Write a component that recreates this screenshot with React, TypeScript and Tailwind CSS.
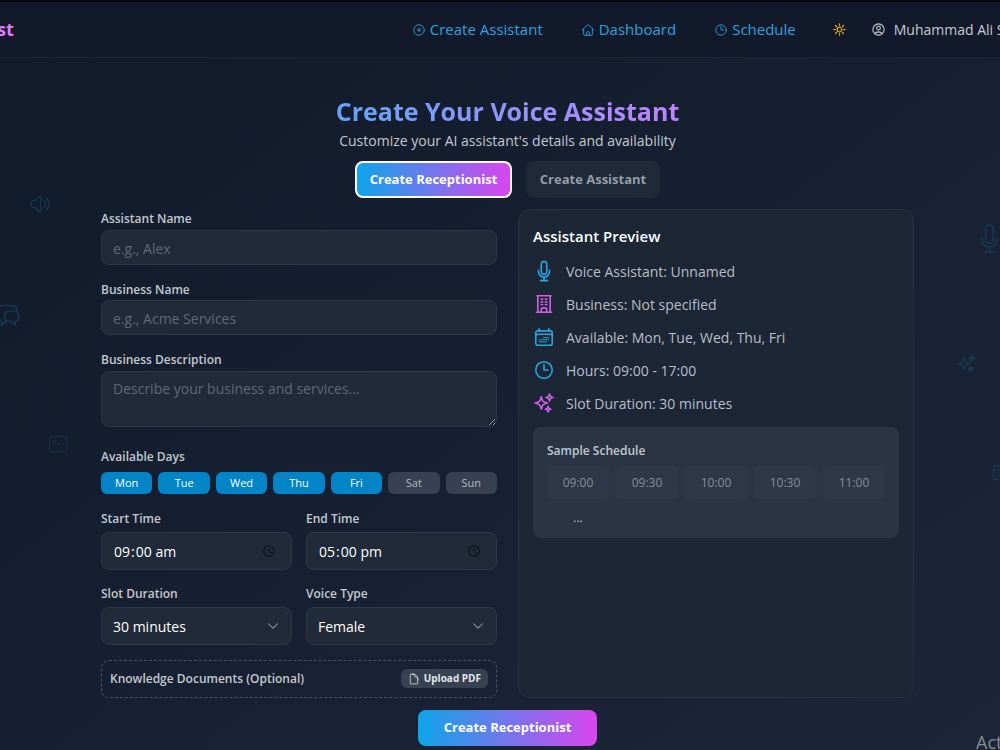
import { useState } from "react";
import type { ReactNode } from "react";
import {
  HiOutlineBuildingOffice,
  HiOutlineCalendarDays,
  HiOutlineChatBubbleLeftRight,
  HiOutlineChevronDown,
  HiOutlineClock,
  HiOutlineCommandLine,
  HiOutlineDocument,
  HiOutlineHome,
  HiOutlineMicrophone,
  HiOutlinePlusCircle,
  HiOutlineSparkles,
  HiOutlineSpeakerWave,
  HiOutlineSun,
  HiOutlineUserCircle,
} from "react-icons/hi2";

const DAYS = ["Mon", "Tue", "Wed", "Thu", "Fri", "Sat", "Sun"];
const SLOTS = ["09:00", "09:30", "10:00", "10:30", "11:00"];

const labelClass = "block text-[12px] leading-[19px] font-semibold text-[#c3c8d0]";
const fieldClass =
  "w-full rounded-lg border border-[#2d3746] bg-[#202a38] px-[11px] text-[14px] text-white placeholder:text-[#5f6978] outline-none";
const timeClass =
  "mt-1 h-[38px] [&::-webkit-datetime-edit-ampm-field]:lowercase [&::-webkit-calendar-picker-indicator]:opacity-60";

function Header() {
  const link = "flex items-center gap-1 text-[15px] text-[#2ba3dc]";
  return (
    <header className="flex h-[58px] items-center justify-between overflow-hidden border-t-2 border-b border-t-[#03050f] border-b-[#1b2635] bg-[#12192b] whitespace-nowrap">
      <a href="#home" className="-ml-[3px] text-[18px] font-bold text-[#df7cf5]">
        st
      </a>
      <nav className="-mr-2 flex items-center">
        <a href="#create" className={link}>
          <HiOutlinePlusCircle className="size-[14px]" />
          Create Assistant
        </a>
        <a href="#dashboard" className={`${link} ml-[38px]`}>
          <HiOutlineHome className="size-[14px]" />
          Dashboard
        </a>
        <a href="#schedule" className={`${link} ml-[38px]`}>
          <HiOutlineClock className="size-[14px]" />
          Schedule
        </a>
        <button type="button" aria-label="Toggle theme" className="ml-9 text-[#d6ab18]">
          <HiOutlineSun className="size-[15px] stroke-2" />
        </button>
        <button type="button" className="ml-6 flex items-center gap-2 text-[14px] text-[#c6cad2]">
          <HiOutlineUserCircle className="size-[15px] stroke-[1.8]" />
          Muhammad Ali Si
        </button>
      </nav>
    </header>
  );
}

function PreviewRow({ icon, children }: { icon: ReactNode; children: ReactNode }) {
  return (
    <li className="flex h-5 items-center gap-[11px]">
      {icon}
      {children}
    </li>
  );
}

function Backdrop() {
  return (
    <div aria-hidden="true" className="pointer-events-none absolute inset-0 overflow-hidden text-[#17364e]">
      <HiOutlineSpeakerWave className="absolute top-[193px] left-[29px] size-[22px]" />
      <HiOutlineChatBubbleLeftRight className="absolute top-[302px] -left-[6px] size-[27px]" />
      <HiOutlineCommandLine className="absolute top-[433px] left-[47px] size-[22px] text-[#172d44]" />
      <HiOutlineMicrophone className="absolute top-[223px] left-[974px] size-[31px]" />
      <HiOutlineSparkles className="absolute top-[353px] left-[956px] size-[21px] text-[#1a3c55]" />
      <HiOutlineCalendarDays className="absolute top-[462px] left-[991px] size-[20px]" />
    </div>
  );
}

export default function App() {
  const [mode, setMode] = useState("receptionist");
  const [name, setName] = useState("");
  const [business, setBusiness] = useState("");
  const [days, setDays] = useState(DAYS.slice(0, 5));
  const [start, setStart] = useState("09:00");
  const [end, setEnd] = useState("17:00");
  const [slot, setSlot] = useState("30 minutes");

  const toggleDay = (day: string) =>
    setDays(DAYS.filter((d) => (d === day ? !days.includes(d) : days.includes(d))));

  const active =
    "border-2 border-white bg-linear-to-r/srgb from-[#0ea5e9] to-[#d946ef] text-white";
  const inactive = "bg-[#1f2937] text-[#969ca7]";

  return (
    <div className="relative min-h-screen overflow-hidden bg-linear-to-br/srgb from-[#111a2b] to-[#1d2638] font-['Open_Sans','Noto_Sans',sans-serif]">
      <Backdrop />
      <div className="relative">
        <Header />
        <main className="pt-[35px] pr-[86px] pb-1 pl-[101px]">
          <div className="flex flex-col items-center">
            <h1 className="bg-linear-to-r/srgb from-[#60a5fa] to-[#c084fc] bg-clip-text text-[25px] leading-9 font-bold text-transparent">
              Create Your Voice Assistant
            </h1>
            <p className="mt-px text-[14px] leading-[22px] text-[#c3c8d0]">
              Customize your AI assistant's details and availability
            </p>
            <div className="mt-[9px] flex gap-[14px]">
              <button
                type="button"
                onClick={() => setMode("receptionist")}
                className={`h-[37px] w-[157px] rounded-lg pt-px text-[13px] font-bold ${mode === "receptionist" ? active : inactive}`}
              >
                Create Receptionist
              </button>
              <button
                type="button"
                onClick={() => setMode("assistant")}
                className={`h-[37px] w-[134px] rounded-lg pt-px text-[13px] font-bold ${mode === "assistant" ? active : inactive}`}
              >
                Create Assistant
              </button>
            </div>
          </div>

          <form onSubmit={(e) => e.preventDefault()}>
            <div className="mt-[11px] grid grid-cols-2 gap-[21px]">
              <div className="flex flex-col gap-[15px]">
                <div>
                  <label htmlFor="name" className={labelClass}>Assistant Name</label>
                  <input
                    id="name"
                    value={name}
                    onChange={(e) => setName(e.target.value)}
                    placeholder="e.g., Alex"
                    className={`${fieldClass} mt-[2px] h-[35px] pt-[2px]`}
                  />
                </div>
                <div>
                  <label htmlFor="business" className={labelClass}>Business Name</label>
                  <input
                    id="business"
                    value={business}
                    onChange={(e) => setBusiness(e.target.value)}
                    placeholder="e.g., Acme Services"
                    className={`${fieldClass} mt-px h-[35px] pt-[2px]`}
                  />
                </div>
                <div className="pb-[5px]">
                  <label htmlFor="description" className={labelClass}>Business Description</label>
                  <textarea
                    id="description"
                    placeholder="Describe your business and services..."
                    className={`${fieldClass} mt-[2px] block h-14 resize-y py-[7px] leading-[20px]`}
                  />
                </div>
                <fieldset>
                  <legend className={labelClass}>Available Days</legend>
                  <div className="mt-[6px] grid grid-cols-7 gap-[6px]">
                    {DAYS.map((day) => (
                      <button
                        key={day}
                        type="button"
                        aria-pressed={days.includes(day)}
                        onClick={() => toggleDay(day)}
                        className={`h-[22px] rounded-md text-[11px] ${
                          days.includes(day)
                            ? "bg-[#0284c7] font-medium text-white"
                            : "bg-[#374151] text-[#b4bac4]"
                        }`}
                      >
                        {day}
                      </button>
                    ))}
                  </div>
                </fieldset>
                <div className="grid grid-cols-2 gap-[14px]">
                  <div>
                    <label htmlFor="start" className={labelClass}>Start Time</label>
                    <input
                      id="start"
                      type="time"
                      value={start}
                      onChange={(e) => setStart(e.target.value)}
                      className={`${fieldClass} ${timeClass}`}
                    />
                  </div>
                  <div>
                    <label htmlFor="end" className={labelClass}>End Time</label>
                    <input
                      id="end"
                      type="time"
                      value={end}
                      onChange={(e) => setEnd(e.target.value)}
                      className={`${fieldClass} ${timeClass}`}
                    />
                  </div>
                  <div>
                    <label htmlFor="slot" className={labelClass}>Slot Duration</label>
                    <div className="relative mt-1">
                      <select
                        id="slot"
                        value={slot}
                        onChange={(e) => setSlot(e.target.value)}
                        className={`${fieldClass} h-[38px] appearance-none`}
                      >
                        <option>15 minutes</option>
                        <option>30 minutes</option>
                        <option>60 minutes</option>
                      </select>
                      <HiOutlineChevronDown className="pointer-events-none absolute top-3 right-3 size-[14px] stroke-2 text-[#848c99]" />
                    </div>
                  </div>
                  <div>
                    <label htmlFor="voice" className={labelClass}>Voice Type</label>
                    <div className="relative mt-1">
                      <select id="voice" className={`${fieldClass} h-[38px] appearance-none`}>
                        <option>Female</option>
                        <option>Male</option>
                      </select>
                      <HiOutlineChevronDown className="pointer-events-none absolute top-3 right-3 size-[14px] stroke-2 text-[#848c99]" />
                    </div>
                  </div>
                </div>
                <div className="flex h-[38px] items-start justify-between rounded-lg border border-dashed border-[#475160] px-2 pt-2">
                  <span className="text-[12px] leading-[19px] font-semibold text-[#c3c8d0]">
                    Knowledge Documents (Optional)
                  </span>
                  <button
                    type="button"
                    className="flex h-[19px] items-center gap-1 rounded-md bg-[#374151] px-[7px] text-[10px] font-bold text-[#e3e6ea]"
                  >
                    <HiOutlineDocument className="size-3" />
                    Upload PDF
                  </button>
                </div>
              </div>

              <section className="rounded-xl border border-[#273241] bg-[#1d2635] p-[14px]">
                <h2 className="text-[15px] leading-6 font-semibold text-white">Assistant Preview</h2>
                <ul className="mt-[13px] flex flex-col gap-[13px] text-[14px] text-[#b9bec8]">
                  <PreviewRow icon={<HiOutlineMicrophone className="size-[22px] stroke-[1.8] text-[#2ba3dc]" />}>
                    Voice Assistant: {name || "Unnamed"}
                  </PreviewRow>
                  <PreviewRow icon={<HiOutlineBuildingOffice className="size-[22px] stroke-[1.8] text-[#d060e6]" />}>
                    Business: {business || "Not specified"}
                  </PreviewRow>
                  <PreviewRow icon={<HiOutlineCalendarDays className="size-[22px] stroke-[1.8] text-[#2ba3dc]" />}>
                    Available: {days.join(", ")}
                  </PreviewRow>
                  <PreviewRow icon={<HiOutlineClock className="size-[22px] stroke-[1.8] text-[#2ba3dc]" />}>
                    Hours: {start} - {end}
                  </PreviewRow>
                  <PreviewRow icon={<HiOutlineSparkles className="size-[22px] stroke-[1.8] text-[#d060e6]" />}>
                    Slot Duration: {slot}
                  </PreviewRow>
                </ul>
                <div className="mt-[14px] rounded-lg bg-[#2b3444] px-[14px] pt-[14px] pb-2">
                  <h3 className="text-[12px] leading-5 font-semibold text-[#c3c8d0]">Sample Schedule</h3>
                  <div className="mt-[5px] grid grid-cols-5 gap-[7px] text-center text-[12px] leading-[33px] text-[#858e9b]">
                    {SLOTS.map((time) => (
                      <span key={time} className="rounded-sm bg-[#2f3847]">{time}</span>
                    ))}
                    <span className="leading-6 text-[#b9bec8]">...</span>
                  </div>
                </div>
              </section>
            </div>
            <div className="mt-3 flex justify-center">
              <button
                type="submit"
                className="h-9 w-[179px] rounded-lg bg-linear-to-r/srgb from-[#0ea5e9] to-[#d946ef] text-[13px] font-bold text-white"
              >
                Create Receptionist
              </button>
            </div>
          </form>
        </main>
      </div>
      <span className="absolute right-0 bottom-[-5px] w-6 overflow-hidden text-[18px] leading-[26px] whitespace-nowrap text-[#858b96]">
        Act
      </span>
    </div>
  );
}
